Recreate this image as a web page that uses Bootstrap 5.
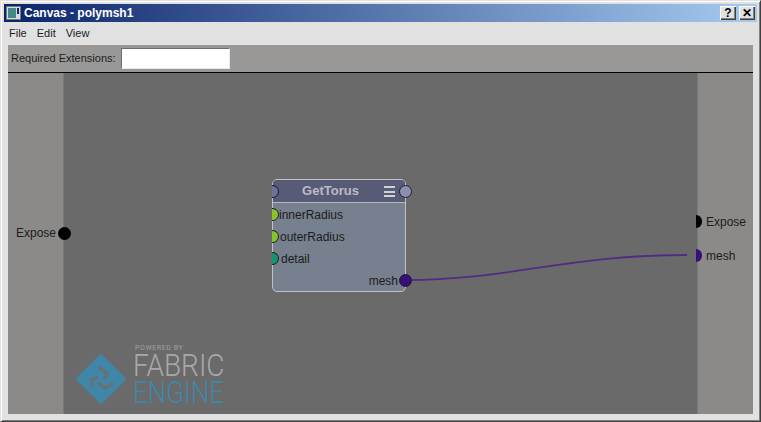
<!DOCTYPE html>
<html lang="en">
<head>
<meta charset="UTF-8">
<title>Canvas - polymsh1</title>
<link href="https://cdn.jsdelivr.net/npm/bootstrap@5.3.0/dist/css/bootstrap.min.css" rel="stylesheet">
<style>
    html, body { height: 100%; }
    body { margin: 0; overflow: hidden; background: #404040; font-family: "Liberation Sans", sans-serif; font-size: 12px; color: #1c1c1c; }
    .app-window { width: 761px; height: 422px; background: #e1e1e1; border: 1px solid #404040; border-top-color: #e1e1e1; border-left-color: #e1e1e1; box-shadow: inset 1px 1px 0 #fff, inset -1px -1px 0 #808080; padding: 3px; }
    .title-bar { height: 18px; background: linear-gradient(90deg, #0a246a, #a6caf0); color: #fff; font-weight: 700; font-size: 12px; padding: 0 2px; gap: 3px; }
    .title-icon { width: 15px; height: 14px; }
    .caption-btn { width: 16px; height: 14px; background: #e1e1e1; border: 0; padding: 0; box-shadow: inset 1px 1px 0 #fff, inset -1px -1px 0 #404040, inset -2px -2px 0 #808080; color: #000; font: 700 12px/14px "Liberation Sans", sans-serif; text-align: center; }
    .menu-row { height: 23px; padding-left: 5px; gap: 10px; font-size: 11px; }
    .pane { margin: 0 0 0 4px; width: 745px; height: 369px; }
    .ext-bar { height: 28px; background: #999897; border-bottom: 1px solid #000; padding-left: 3px; gap: 5px; font-size: 11px; }
    .ext-input { width: 109px; height: 21px; background: #fff; border: 1px solid; border-color: #6e6e6e #e8e8e8 #e8e8e8 #6e6e6e; }
    .stage { height: 341px; background: #6a6a6a; }
    .side-col { width: 56px; background: #8b8a88; height: 100%; }
    .side-col-l { border-right: 1px solid #7a7a79; }
    .side-col-r { margin-left: auto; border-left: 1px solid #7a7a79; }
    .wire-layer { left: 0; top: 0; }
    .side-label, .port-label { position: absolute; line-height: 16px; white-space: nowrap; }
    .dot { position: absolute; width: 13px; height: 13px; border-radius: 50%; }
    .half-dot { position: absolute; width: 7px; height: 13px; border-radius: 0 7px 7px 0; }
    .tor-node { position: absolute; left: 264px; top: 106px; width: 134px; height: 113px; background: #76808f; border: 1px solid #bfc2c6; border-radius: 5px; }
    .tor-head { height: 23px; background: #575b75; border-bottom: 1px solid #b5b8bd; border-radius: 4px 4px 0 0; color: #b9bbc4; font-weight: 700; font-size: 13px; line-height: 22px; text-align: center; padding-right: 17px; }
    .burger { position: absolute; left: 111px; top: 6px; width: 11px; height: 11px; border-top: 2px solid #d0d1d4; border-bottom: 2px solid #d0d1d4; }
    .burger::after { content: ""; display: block; height: 2px; margin-top: 2.5px; background: #d0d1d4; }
    .brand-mark { position: absolute; left: 66px; top: 279px; }
    .brand-small, .brand-big { position: absolute; font-family: Roboto, sans-serif; white-space: nowrap; }
    .brand-small { left: 127px; top: 271px; font-size: 7px; line-height: 9px; color: #a0a0a0; letter-spacing: .6px; }
    .brand-big { left: 125px; height: 22px; line-height: 22px; font-weight: 300; transform-origin: left center; }
    .brand-a { top: 282px; font-size: 28px; color: #a8a8a8; transform: scaleY(1.1); }
    .brand-b { top: 308px; font-size: 26px; color: #3f86a8; transform: scaleY(1.19); }
</style>
</head>
<body>
<div class="app-window d-flex flex-column">
    <div class="title-bar d-flex align-items-center">
        <svg class="title-icon" viewBox="0 0 15 14"><rect x=".5" y=".5" width="14" height="13" fill="#d8dce0" stroke="#777"/><rect x="2" y="2" width="8" height="10" fill="#3f8a86"/><rect x="11" y="2" width="2" height="6" fill="#0a246a"/></svg>
        <span class="flex-grow-1">Canvas - polymsh1</span>
        <button class="caption-btn">?</button>
        <button class="caption-btn">✕</button>
    </div>
    <div class="menu-row d-flex align-items-center"><span>File</span><span>Edit</span><span>View</span></div>
    <div class="pane">
        <div class="ext-bar d-flex align-items-center"><span>Required Extensions:</span><div class="ext-input"></div></div>
        <div class="stage d-flex position-relative">
            <div class="side-col side-col-l"></div>
            <div class="side-col side-col-r"></div>
            <svg class="wire-layer position-absolute" width="745" height="341"><path d="M398 207 C 500 207, 560 182, 679 182" fill="none" stroke="#4f2c86" stroke-width="1.8"/></svg>
            <span class="side-label" style="left:8px;top:152px">Expose</span>
            <span class="dot" style="left:50px;top:154px;background:#000"></span>
            <span class="half-dot" style="left:688px;top:142px;width:6px;background:#000"></span>
            <span class="side-label" style="left:698px;top:141px">Expose</span>
            <span class="half-dot" style="left:688px;top:176px;width:6px;background:#3a0f78"></span>
            <span class="side-label" style="left:698px;top:175px">mesh</span>
            <div class="tor-node">
                <div class="tor-head">GetTorus<span class="burger"></span></div>
                <span class="half-dot" style="left:-1px;top:5px;background:#6f7295;border:1px solid #1c1c30;border-left:0"></span>
                <span class="dot" style="left:126px;top:5px;background:#8b90ad;border:1px solid #22222e"></span>
                <span class="half-dot" style="left:-1px;top:28px;background:#88c22e;border:1px solid #222;border-left:0"></span>
                <span class="port-label" style="left:6px;top:27px">innerRadius</span>
                <span class="half-dot" style="left:-1px;top:50px;background:#88c22e;border:1px solid #222;border-left:0"></span>
                <span class="port-label" style="left:7px;top:49px">outerRadius</span>
                <span class="half-dot" style="left:-1px;top:72px;background:#12966e;border:1px solid #222;border-left:0"></span>
                <span class="port-label" style="left:8px;top:71px">detail</span>
                <span class="port-label" style="right:7px;top:93px">mesh</span>
                <span class="dot" style="left:126px;top:94px;background:#3a0f78;border:1px solid #1c1c30"></span>
            </div>
            <svg class="brand-mark" width="54" height="54" viewBox="0 0 54 54"><rect x="9" y="9" width="36" height="36" rx="2" transform="rotate(45 27 27)" fill="#3f86a8"/><path d="M24 15 L33 21 L30 28 M18 35 L18 28 L24 25 M24 31 L31 36 L39 31" fill="none" stroke="#6b6f72" stroke-width="3"/></svg>
            <span class="brand-small">POWERED BY</span>
            <span class="brand-big brand-a">FABRIC</span>
            <span class="brand-big brand-b">ENGINE</span>
        </div>
    </div>
</div>
<script src="https://cdn.jsdelivr.net/npm/bootstrap@5.3.0/dist/js/bootstrap.bundle.min.js"></script>
</body>
</html>
